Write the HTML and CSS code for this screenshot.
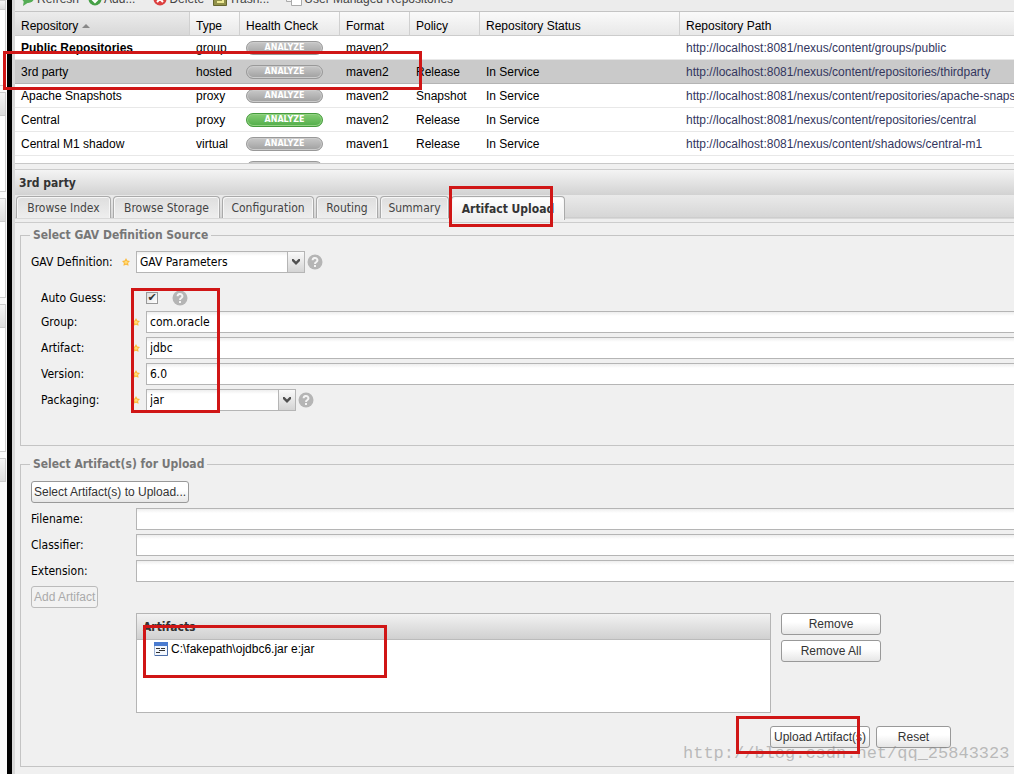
FILE: index.html
```html
<!DOCTYPE html>
<html lang="en">
<head>
<meta charset="utf-8">
<title>Nexus Repositories</title>
<link rel="stylesheet" href="styles.css">
</head>
<body>
<svg class="defs" aria-hidden="true">
  <defs>
    <symbol id="help" viewBox="0 0 16 16"><circle cx="8" cy="8" r="7.5" fill="#b5b5b5"/><path d="M5.6 6.2a2.4 2.2 0 1 1 3.6 1.9Q8 8.7 8 9.9" fill="none" stroke="#f4f4f4" stroke-width="1.9"/><rect x="7" y="11" width="2" height="2" fill="#f4f4f4"/></symbol>
    <symbol id="star" viewBox="0 0 8 8"><path d="M4 0l1.3 2.400 2.700.500-1.900 2 .5 2.900L4 6.700 1.400 7.800l.5-2.900L0 2.900l2.700-.5z" fill="#fbb93c"/><circle cx="4" cy="4.200" r="1.500" fill="#ffdc78"/></symbol>
    <symbol id="arrow" viewBox="0 0 16 20"><path d="M4 7h1.500L8 9.500 10.500 7H12v2l-4 4-4-4z" fill="#505050"/></symbol>
  </defs>
</svg>
<div class="app">
  <aside class="side">
    <div class="side-head first"></div><div class="side-body"></div>
    <div class="side-head"></div><div class="side-body"></div>
    <div class="side-head"></div><div class="side-body"></div>
    <div class="side-head"></div><div class="side-body tall"></div>
    <div class="side-head"></div>
  </aside>
  <div class="splitter"></div>
  <main class="main">
    <div class="toolbar">
      <button class="tool refresh"><svg width="14" height="14" viewBox="0 0 14 14"><ellipse cx="7" cy="6" rx="6" ry="5" fill="#55ad55"/><path d="M3 8l-1 6 6-4z" fill="#55ad55"/><path d="M4 7h6" stroke="#fff"/></svg>Refresh</button>
      <button class="tool add"><svg width="14" height="14" viewBox="0 0 14 14"><circle cx="7" cy="7" r="6.500" fill="#46a046"/><path d="M4 7l3 3 3-3" fill="none" stroke="#fff" stroke-width="2"/></svg>Add...</button>
      <button class="tool delete"><svg width="14" height="14" viewBox="0 0 14 14"><circle cx="7" cy="7" r="6.500" fill="#dc4040"/><path d="M4 10l6-6M4 4l6 6" stroke="#fff" stroke-width="2"/></svg>Delete</button>
      <button class="tool trash"><svg width="14" height="14" viewBox="0 0 14 14"><path d="M.5.5h13v13H.5z" fill="#91914a" stroke="#66662e"/><path d="M4 10h6V4" fill="none" stroke="#eee995" stroke-width="2"/></svg>Trash...</button>
      <button class="tool"><svg width="16" height="14" viewBox="0 0 16 14"><path d="M.5.5h9v9h-9z" fill="#f5f5f5" stroke="#aaa"/><path d="M5.500 3.500h10v10h-10z" fill="#fff" stroke="#aaa"/></svg>User Managed Repositories</button>
    </div>
    <div class="grid">
      <table class="repos">
        <colgroup><col class="c-name"><col class="c-type"><col class="c-health"><col class="c-format"><col class="c-policy"><col class="c-status"><col></colgroup>
        <thead><tr><th class="sorted">Repository <svg width="8" height="4" viewBox="0 0 8 4"><path d="M0 4l4-4 4 4z" fill="#888"/></svg></th><th>Type</th><th>Health Check</th><th>Format</th><th>Policy</th><th>Repository Status</th><th>Repository Path</th></tr></thead>
        <tbody>
          <tr><td><b>Public Repositories</b></td><td>group</td><td><button class="pill">ANALYZE</button></td><td>maven2</td><td></td><td></td><td><a href="#">http://localhost:8081/nexus/content/groups/public</a></td></tr>
          <tr class="selected"><td>3rd party</td><td>hosted</td><td><button class="pill">ANALYZE</button></td><td>maven2</td><td>Release</td><td>In Service</td><td><a href="#">http://localhost:8081/nexus/content/repositories/thirdparty</a></td></tr>
          <tr><td>Apache Snapshots</td><td>proxy</td><td><button class="pill">ANALYZE</button></td><td>maven2</td><td>Snapshot</td><td>In Service</td><td><a href="#">http://localhost:8081/nexus/content/repositories/apache-snapshots</a></td></tr>
          <tr><td>Central</td><td>proxy</td><td><button class="pill green">ANALYZE</button></td><td>maven2</td><td>Release</td><td>In Service</td><td><a href="#">http://localhost:8081/nexus/content/repositories/central</a></td></tr>
          <tr><td>Central M1 shadow</td><td>virtual</td><td><button class="pill">ANALYZE</button></td><td>maven1</td><td>Release</td><td>In Service</td><td><a href="#">http://localhost:8081/nexus/content/shadows/central-m1</a></td></tr>
          <tr><td></td><td></td><td><span class="pill"></span></td><td></td><td></td><td></td><td></td></tr>
        </tbody>
      </table>
    </div>
    <h2 class="title">3rd party</h2>
    <nav class="tabs">
      <button class="tab w-index">Browse Index</button><button class="tab w-storage">Browse Storage</button><button class="tab w-config">Configuration</button><button class="tab w-routing">Routing</button><button class="tab w-summary">Summary</button><button class="tab w-upload active">Artifact Upload</button>
    </nav>
    <form class="form">
      <fieldset class="group gav">
        <legend>Select GAV Definition Source</legend>
        <div class="row">
          <label for="gav">GAV Definition:</label><svg class="star"><use href="#star"/></svg>
          <div class="combo wide"><select id="gav"><option>GAV Parameters</option></select><svg class="trigger"><use href="#arrow"/></svg></div>
          <svg class="help"><use href="#help"/></svg>
        </div>
        <div class="params">
          <div class="row check-row"><label for="guess">Auto Guess:</label><span class="star"></span><input class="check" id="guess" type="checkbox" checked><svg class="help spaced"><use href="#help"/></svg></div>
          <div class="row"><label for="grp">Group:</label><svg class="star"><use href="#star"/></svg><input class="text" id="grp" value="com.oracle"></div>
          <div class="row"><label for="art">Artifact:</label><svg class="star"><use href="#star"/></svg><input class="text" id="art" value="jdbc"></div>
          <div class="row"><label for="ver">Version:</label><svg class="star"><use href="#star"/></svg><input class="text" id="ver" value="6.0"></div>
          <div class="row"><label for="pkg">Packaging:</label><svg class="star"><use href="#star"/></svg><div class="combo"><select id="pkg"><option>jar</option></select><svg class="trigger"><use href="#arrow"/></svg></div><svg class="help"><use href="#help"/></svg></div>
        </div>
      </fieldset>
      <fieldset class="group upload">
        <legend>Select Artifact(s) for Upload</legend>
        <button type="button" class="btn">Select Artifact(s) to Upload...</button>
        <div class="fields">
          <div class="row"><label for="fn">Filename:</label><span class="star"></span><input class="text" id="fn"></div>
          <div class="row"><label for="cl">Classifier:</label><span class="star"></span><input class="text" id="cl"></div>
          <div class="row"><label for="ex">Extension:</label><span class="star"></span><input class="text" id="ex"></div>
        </div>
        <button type="button" class="btn" disabled>Add Artifact</button>
        <div class="list-row">
          <section class="list">
            <h3>Artifacts</h3>
            <div class="item"><svg width="14" height="14" viewBox="0 0 14 14"><path d="M.5.500h13v13H.5z" fill="#f3f7fd" stroke="#9fb4d6"/><path d="M0 0h14v4H0z" fill="#4a7bd0"/><path d="M13.500 4v9.500H1" fill="none" stroke="#4a6ca8"/><path d="M2 6.500h4M7 6.500h4M5 8.500h6M2 10.500h4" stroke="#333"/></svg>C:\fakepath\ojdbc6.jar e:jar</div>
          </section>
          <div class="list-actions"><button type="button" class="btn">Remove</button><button type="button" class="btn">Remove All</button></div>
        </div>
        <div class="submit"><button type="button" class="btn send">Upload Artifact(s)</button><button type="button" class="btn reset">Reset</button></div>
      </fieldset>
    </form>
  </main>
  <div class="watermark">http://blog.csdn.net/qq_25843323</div>
  <div class="mark mark-row"></div>
  <div class="mark mark-tab"></div>
  <div class="mark mark-params"></div>
  <div class="mark mark-file"></div>
  <div class="mark mark-send"></div>
</div>
</body>
</html>
```

FILE: styles.css
```css
* { box-sizing: border-box; }
body { margin: 0; background: #f0f0f0; color: #000; font: 12px/16px "Liberation Sans", Arial, sans-serif; }
button, input, select { font: inherit; color: inherit; margin: 0; }
.defs { position: absolute; width: 0; height: 0; }
.app { position: relative; display: flex; min-height: 100vh; overflow: hidden; }

.side { width: 7px; flex: none; padding-right: 1px; background: #fafafa; }
.side-head { height: 24px; border: 1px solid #ccc; border-left: 0; background: linear-gradient(#f4f4f4, #ddd); }
.side-head.first { height: 10px; }
.side-body { height: 76px; margin-bottom: 6px; border: 1px solid #d0d0d0; border-width: 0 1px 1px 0; background: #fff; }
.side-body.tall { height: 124px; }
.splitter { width: 8px; flex: none; background: #d8d8d8; border-left: 5px solid #000; }
.main { flex: 1; min-width: 0; }

.toolbar { display: flex; align-items: flex-end; height: 12px; padding: 0 6px 4px; overflow: hidden; background: #ececec; border-bottom: 1px solid #c4c4c4; }
.tool { display: flex; flex: none; align-items: center; gap: 2px; height: 16px; padding: 0; border: 0; background: none; color: #444; font: 12px/16px "Liberation Sans", Arial, sans-serif; }
.refresh { margin-right: 9px; }
.add { margin-right: 18px; }
.delete { margin-right: 9px; }
.trash { margin-right: 17px; }

.grid { height: 152px; overflow: hidden; background: #fff; border-bottom: 1px solid #c8c8c8; }
.repos { width: 100%; table-layout: fixed; border-collapse: separate; border-spacing: 0; }
.c-name { width: 175px; }
.c-type { width: 50px; }
.c-health { width: 100px; }
.c-format, .c-policy { width: 70px; }
.c-status { width: 200px; }
.repos th, .repos td { height: 24px; padding: 0 0 0 6px; overflow: hidden; white-space: nowrap; text-align: left; font-weight: normal; vertical-align: middle; line-height: 16px; }
.repos th { padding-top: 4px; background: linear-gradient(#fafafa, #e8e8e8); border-right: 1px solid #d0d0d0; border-bottom: 1px solid #ccc; }
.repos th:last-child { border-right: 0; }
.repos th.sorted { background: linear-gradient(#ececec, #d8d8d8); }
.repos td { border-bottom: 1px solid #e8e8e8; }
.repos svg { vertical-align: middle; }
.selected td { background: #cacaca; border-bottom-color: #b4b4b4; }
.repos a { color: #33365e; text-decoration: none; }
.pill { display: block; width: 77px; height: 14px; padding: 0; border: 1px solid #999; border-radius: 7px; background: linear-gradient(#c8c8c8, #a0a0a0); box-shadow: inset 0 0 0 1px #ccc; color: #fff; font: bold 8px/12px "DejaVu Sans", sans-serif; text-align: center; }
.pill.green { border-color: #459b3c; background: linear-gradient(#85cd73, #51ad49); box-shadow: inset 0 0 0 1px #93d284; }

.title { height: 26px; margin: 5px 0 0; padding: 0 4px; border-top: 1px solid #ccc; background: linear-gradient(#f4f4f4, #d2d2d2); color: #333; font: bold 12px/26px "DejaVu Sans Condensed", "DejaVu Sans", sans-serif; }
.tabs { display: flex; gap: 2px; height: 28px; padding: 1px 1px 3px; border-bottom: 1px solid #ccc; background: linear-gradient(#eaeaea, #d6d6d6 22px, #c4c4c4 23px, #eee 24px); }
.tab { height: 22px; padding: 0; flex: none; border: 1px solid #aaa; border-bottom: 0; border-radius: 4px 4px 0 0; background: linear-gradient(#dedede, #eee); box-shadow: inset 1px 1px #f6f6f6, inset -1px 0 #f6f6f6; color: #444; font: 12px/20px "DejaVu Sans Condensed", "DejaVu Sans", sans-serif; text-align: center; white-space: nowrap; }
.tab.active { height: 24px; background: linear-gradient(#fff, #eee); color: #333; font-weight: bold; }
.w-index { width: 95px; }
.w-storage { width: 107px; }
.w-config { width: 92px; }
.w-routing { width: 62px; }
.w-summary { width: 69px; }
.w-upload { width: 114px; }

.form { padding: 4px 0 7px 5px; font-family: "DejaVu Sans Condensed", "DejaVu Sans", sans-serif; }
.group { min-width: 0; margin: 0; padding: 0 0 0 10px; border: 1px solid #c4c4c4; border-right: 0; }
.group legend { padding: 0 3px; margin-left: -1px; color: #777; font-weight: bold; line-height: 16px; }
.gav { padding-bottom: 34px; margin-bottom: 10px; }
.gav > .row { margin-top: 8px; }
.row { display: flex; align-items: center; height: 22px; }
.row label { width: 91px; flex: none; }
.star { width: 8px; height: 8px; margin-right: 6px; flex: none; }
.params { display: grid; gap: 4px; margin: 16px 0 0 10px; }
.check-row { height: 18px; }
.text { flex: 1; min-width: 0; height: 22px; padding: 0 3px; border: 1px solid #b5b5b5; border-right: 0; border-radius: 0; background: linear-gradient(#eee, #fff 4px); }
.check { appearance: none; display: grid; place-items: center; width: 12px; height: 12px; border: 1px solid #999; background: linear-gradient(135deg, #ddd, #fff); }
.check:checked::after { content: "✔"; color: #333; font: 11px/10px "DejaVu Sans", sans-serif; }
.combo { position: relative; width: 150px; height: 22px; }
.combo.wide { width: 169px; }
.combo select { appearance: none; width: 100%; height: 22px; padding: 0 20px 0 3px; border: 1px solid #b5b5b5; border-radius: 0; background: linear-gradient(#eee, #fff 4px); }
.trigger { position: absolute; top: 1px; right: 1px; width: 17px; height: 20px; border-left: 1px solid #b5b5b5; background: linear-gradient(#fafafa, #d4d4d4); pointer-events: none; }
.help { width: 16px; height: 16px; margin-left: 2px; flex: none; }
.help.spaced { margin-left: 14px; }

.btn { display: block; height: 22px; padding: 0 2px; border: 1px solid #999; border-radius: 3px; background: linear-gradient(#fff 40%, #e6e6e6); color: #333; font: 12px/20px "Liberation Sans", Arial, sans-serif; white-space: nowrap; }
.btn:disabled { color: #aaa; border-color: #bbb; background: #f2f2f2; }
.upload legend + .btn { margin-top: 9px; }
.fields { display: grid; gap: 4px; margin: 5px 0 4px; }
.list-row { display: flex; gap: 10px; margin: 5px 0 0 105px; }
.list { flex: 0 1 635px; height: 100px; border: 1px solid #b5b5b5; background: #fff; }
.list h3 { height: 26px; margin: 0; padding: 0 6px; border-bottom: 1px solid #bbb; background: linear-gradient(#f2f2f2, #d0d0d0); color: #333; font: bold 12px/26px "DejaVu Sans Condensed", sans-serif; }
.item { display: flex; align-items: center; gap: 3px; padding: 1px 17px; font-family: "Liberation Sans", Arial, sans-serif; }
.list-actions { display: grid; gap: 5px; align-content: start; width: 100px; }
.submit { display: flex; justify-content: flex-end; gap: 6px; padding: 13px 63px 18px 0; }
.send { width: 100px; }
.reset { width: 75px; }

.mark { position: absolute; border: 3px solid #d01616; pointer-events: none; }
.mark-row { left: 3px; top: 51px; width: 419px; height: 39px; }
.mark-tab { left: 449px; top: 186px; width: 104px; height: 41px; }
.mark-params { left: 131px; top: 288px; width: 89px; height: 125px; }
.mark-file { left: 143px; top: 625px; width: 244px; height: 53px; }
.mark-send { left: 736px; top: 716px; width: 124px; height: 38px; }
.watermark { position: absolute; left: 683px; top: 744px; color: rgba(130, 130, 130, .5); font: 17px/20px "Liberation Mono", monospace; pointer-events: none; }
```
